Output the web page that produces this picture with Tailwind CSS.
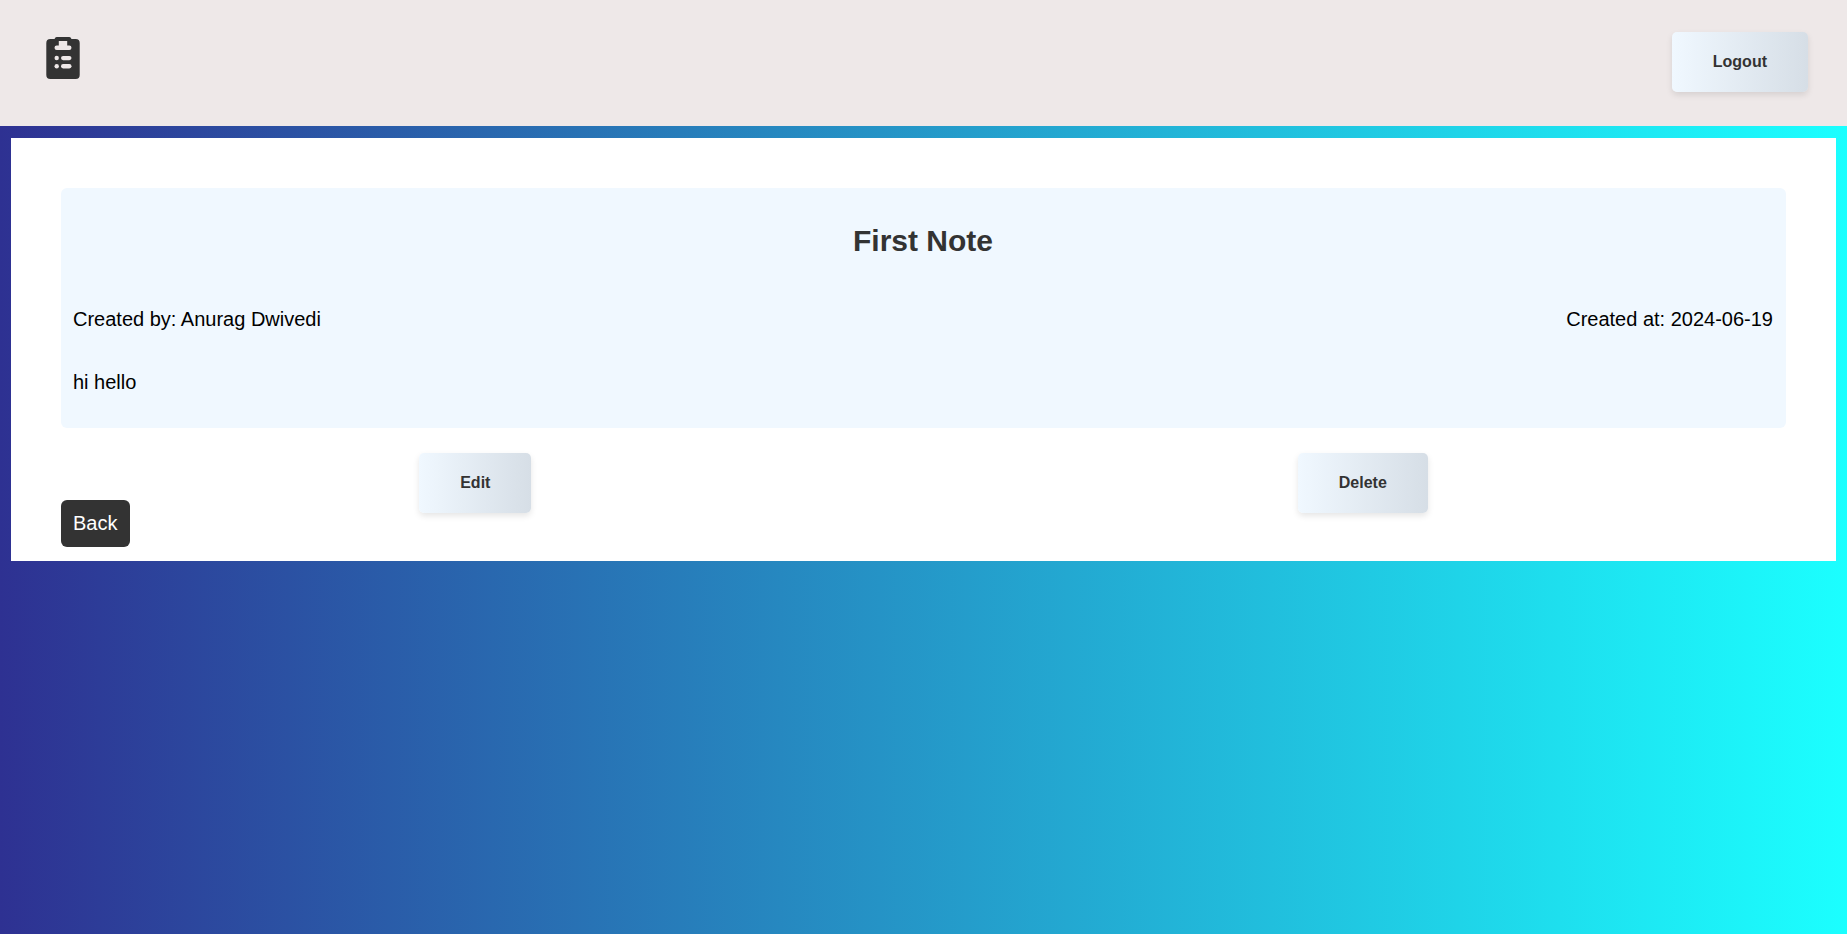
<!DOCTYPE html>
<html lang="en">
<head>
<meta charset="utf-8">
<title>First Note</title>
<script src="https://cdn.jsdelivr.net/npm/@tailwindcss/browser@4"></script>
</head>
<body class="min-h-screen bg-linear-[to_right_in_srgb,#2e3192,#1bffff] bg-fixed font-['Liberation_Sans',Arial,sans-serif] text-xl leading-6 text-black">
  <header class="flex items-start justify-between bg-[#eee8e8] pt-8 pr-[39px] pb-[34px] pl-[46px]">
    <a href="#" aria-label="Notes" class="mt-[5px] block">
      <svg width="34" height="42" viewBox="0 0 34 42" aria-hidden="true">
        <path fill="#333" d="M4.300 2H8.500Q9.200 0 10.700 0H23.300Q24.800 0 25.500 2H29.700A4 4 0 0 1 33.700 6V38A4 4 0 0 1 29.700 42H4.300A4 4 0 0 1 .3 38V6A4 4 0 0 1 4.300 2Z"/>
        <g fill="#eee8e8">
          <path d="M12.800 4H21.200V8.500H23.300A2.200 2.200 0 0 1 23.300 12.900H10.700A2.200 2.200 0 0 1 10.700 8.500H12.800Z"/>
          <circle cx="10.700" cy="21" r="2.200"/><rect x="15" y="18.900" width="10.500" height="4.300" rx="2.150"/>
          <circle cx="10.700" cy="29.300" r="2.200"/><rect x="15" y="27.100" width="10.500" height="4.300" rx="2.150"/>
        </g>
      </svg>
    </a>
    <button type="button" class="h-[60px] cursor-pointer rounded-[5px] bg-linear-[to_right,#f0f8ff,#d6dee6] px-[41px] text-base font-bold text-[#333] shadow-[0_3px_6px_rgba(0,0,0,0.1)]">Logout</button>
  </header>

  <main class="mx-[11px] mt-3 bg-white px-[50px] pt-[50px] pb-[14px]">
    <article class="rounded-md bg-[#f0f8ff] pt-[35px] pr-[13px] pb-[34px] pl-3">
      <h1 class="text-center text-[30px] leading-9 font-bold text-[#333]">First Note</h1>
      <div class="mt-12 flex justify-between">
        <p>Created by: Anurag Dwivedi</p>
        <p>Created at: 2024-06-19</p>
      </div>
      <p class="mt-[39px]">hi hello</p>
    </article>
    <div class="mt-[25px] flex justify-around gap-[50px]">
      <button type="button" class="h-[60px] cursor-pointer rounded-[5px] bg-linear-[to_right,#f0f8ff,#d6dee6] px-[41px] text-base font-bold text-[#333] shadow-[0_3px_6px_rgba(0,0,0,0.1)]">Edit</button>
      <button type="button" class="h-[60px] cursor-pointer rounded-[5px] bg-linear-[to_right,#f0f8ff,#d6dee6] px-[41px] text-base font-bold text-[#333] shadow-[0_3px_6px_rgba(0,0,0,0.1)]">Delete</button>
    </div>
    <a href="#" class="-mt-[13px] block w-fit rounded-md bg-[#333] pt-[11px] pr-[13px] pb-3 pl-3 text-white">Back</a>
  </main>
</body>
</html>
